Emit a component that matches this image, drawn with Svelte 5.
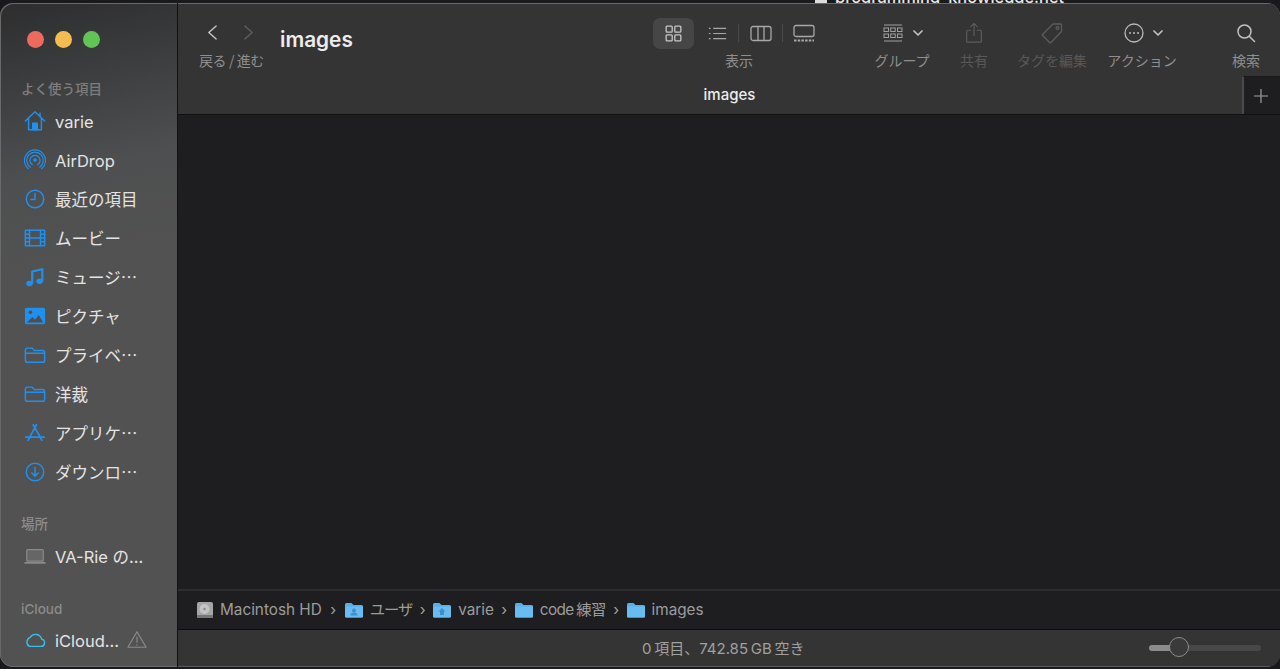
<script>
  const items = [
    ['home', 'varie', true], ['airdrop', 'AirDrop', true], ['clock', '最近の項目', false], ['film', 'ムービー', false],
    ['music', 'ミュージ…', false], ['photo', 'ピクチャ', false], ['folder', 'プライベ…', false], ['folder', '洋裁', false],
    ['apps', 'アプリケ…', false], ['download', 'ダウンロ…', false]
  ];
  const crumbs = [['user', 'ユーザ', 'kana'], ['home', 'varie', ''], ['plain', 'code 練習', 'mixed'], ['plain', 'images', '']];
</script>

{#snippet sideIcon(kind)}
  <svg class="sicon" viewBox="0 0 24 24" fill="none" stroke="#2090f0" stroke-width="1.6" stroke-linejoin="round" stroke-linecap="round">
    {#if kind === 'home'}
      <path d="M1.500 12 12 2l10.500 10M5 9v12.500h14V9M17.500 3.500v3" /><path d="M9.500 21.500v-7h5v7z" fill="#2090f0" />
    {:else if kind === 'airdrop'}
      <circle cx="12" cy="12" r="2" fill="#2090f0" stroke="none" />
      <path d="M9 17a5.500 5.500 0 1 1 6 0M6.800 19.800a9 9 0 1 1 10.400 0M4.800 21.500a11.500 11.500 0 1 1 14.400 0" stroke-width="1.300" />
    {:else if kind === 'clock'}
      <circle cx="12" cy="12" r="9.500" /><path d="M12 6v6.500H7.500" />
    {:else if kind === 'film'}
      <rect x="1.500" y="3.500" width="21" height="17" /><path d="M6 3.500v17M18 3.500v17M6 12h12M1.500 8h4.500M1.500 12h4.500M1.500 16h4.500M18 8h4.500M18 12h4.500M18 16h4.500" />
    {:else if kind === 'music'}
      <path d="M9 18.500V6l11-2.500V16" stroke-width="2.400" /><ellipse cx="6" cy="19" rx="3.500" ry="3" fill="#2090f0" stroke="none" /><ellipse cx="17" cy="16.500" rx="3.500" ry="3" fill="#2090f0" stroke="none" />
    {:else if kind === 'photo'}
      <rect x="1" y="3" width="22" height="18" rx="2" fill="#2090f0" stroke="none" />
      <path d="M3 19l6-6 3 3 4-5 5 8z" fill="#4f4f4f" stroke="none" /><circle cx="7" cy="8" r="2" fill="#4f4f4f" stroke="none" />
    {:else if kind === 'folder'}
      <path d="M1.500 6.500a2 2 0 0 1 2-2h5.500l2 2.500h9.500a2 2 0 0 1 2 2v9a2 2 0 0 1-2 2h-17a2 2 0 0 1-2-2zM1.500 10h21" />
    {:else if kind === 'apps'}
      <path d="M13.500 3 6 17M10 3l8 14M2 16.500h20M4.500 20 6 17.500M19.500 20 18 17.500" stroke-width="1.900" />
    {:else if kind === 'download'}
      <circle cx="12" cy="12" r="9.500" /><path d="M12 7v9.500M8.500 13l3.500 3.500 3.500-3.500" />
    {/if}
  </svg>
{/snippet}

{#snippet crumbFolder(kind)}
  <svg class="cfolder" viewBox="0 0 18 16">
    <path d="M0 2.500A1.500 1.500 0 0 1 1.500 1h5l2 2H16.500A1.500 1.500 0 0 1 18 4.500V14a1.500 1.500 0 0 1-1.500 1.500h-15A1.500 1.500 0 0 1 0 14z" fill="#5aaee6" />
    <path d="M0 4.500h18V14a1.500 1.500 0 0 1-1.500 1.500h-15A1.500 1.500 0 0 1 0 14z" fill="#69bcf0" />
    {#if kind === 'user'}
      <circle cx="9" cy="8.500" r="2" fill="#3f8fc8" /><path d="M5.500 13.500a3.500 3 0 0 1 7 0z" fill="#3f8fc8" />
    {:else if kind === 'home'}
      <path d="M9 6 5.500 9.500H7V13h4V9.500h1.500z" fill="#3f8fc8" />
    {/if}
  </svg>
{/snippet}

<div class="page">
  <div class="peek"><span class="peek-doc"></span><span class="peek-text">programming_knowledge.net</span></div>
  <div class="window">
    <aside class="sidebar">
      <div class="lights"><i class="red"></i><i class="yellow"></i><i class="green"></i></div>
      <div class="heading first">よく使う項目</div>
      {#each items as [kind, label, latin]}
        <div class="row" class:latin>{@render sideIcon(kind)}<span>{label}</span></div>
      {/each}
      <div class="heading place">場所</div>
      <div class="row latin">
        <svg class="sicon" viewBox="0 0 24 24" fill="none" stroke="#8a8a8a" stroke-width="1.300">
          <rect x="3" y="5" width="18" height="12.500" rx="1" fill="#666" /><path d="M0.500 19.500h23" stroke-width="2" />
        </svg>
        <span>VA-Rie の…</span>
      </div>
      <div class="heading cloud">iCloud</div>
      <div class="row latin">
        <svg class="sicon" viewBox="0 0 24 24" fill="none" stroke="#35c0e8" stroke-width="1.500">
          <path d="M6 19h12.500a4 4 0 0 0 .8-7.900 7 7 0 0 0-12.600-2A5.500 5.500 0 0 0 6 19z" />
        </svg>
        <span>iCloud…</span>
        <svg class="warn" viewBox="0 0 22 20" fill="none" stroke="#8a8a8a" stroke-width="1.300" stroke-linejoin="round">
          <path d="M11 1.500 1 18.500h20z" /><path d="M11 7v6.500M11 15.300v1.200" />
        </svg>
      </div>
    </aside>

    <main class="main">
      <header class="toolbar">
        <div class="tools">
          <div class="nav">
            <div class="nav-icons">
              <svg class="chev" viewBox="0 0 12 18" fill="none" stroke="#c8c8c8" stroke-width="1.500" stroke-linecap="round" stroke-linejoin="round"><path d="M10 2 2 9l8 7" /></svg>
              <svg class="chev" viewBox="0 0 12 18" fill="none" stroke="#5e5e5e" stroke-width="1.500" stroke-linecap="round" stroke-linejoin="round"><path d="m2 2 8 7-8 7" /></svg>
            </div>
            <div class="label">戻る / 進む</div>
          </div>
          <div class="title">images</div>

          <div class="view">
            <div class="view-icons">
              <div class="view-active">
                <svg class="ti" viewBox="0 0 22 22" fill="none" stroke="#c8c8c8" stroke-width="1.500"><rect x="2.500" y="2.500" width="7" height="7" rx="1" /><rect x="12.500" y="2.500" width="7" height="7" rx="1" /><rect x="2.500" y="12.500" width="7" height="7" rx="1" /><rect x="12.500" y="12.500" width="7" height="7" rx="1" /></svg>
              </div>
              <svg class="ti list" viewBox="0 0 22 22" fill="none" stroke="#a8a8a8" stroke-width="1.300"><path d="M6 5h15M6 11h15M6 17h15M1 5h2M1 11h2M1 17h2" /></svg>
              <i class="sep"></i>
              <svg class="ti cols" viewBox="0 0 22 16" fill="none" stroke="#a8a8a8" stroke-width="1.300"><rect x="1" y="1" width="20" height="14" rx="2" /><path d="M8 1v14M14 1v14" /></svg>
              <i class="sep"></i>
              <svg class="ti gallery" viewBox="0 0 22 18" fill="none" stroke="#a8a8a8" stroke-width="1.300"><rect x="1" y="1" width="20" height="11" rx="2" /><path d="M1 16h20" stroke-width="2" stroke-dasharray="2.500 1.200" /></svg>
            </div>
            <div class="label">表示</div>
          </div>

          <div class="tool group">
            <div class="tool-icon">
              <svg class="ti2" viewBox="0 0 20 18" fill="none" stroke="#a0a0a0" stroke-width="1"><path d="M1 1h18M1 17h18" /><rect x="1" y="4" width="4.500" height="3.500" /><rect x="7.700" y="4" width="4.500" height="3.500" /><rect x="14.500" y="4" width="4.500" height="3.500" /><rect x="1" y="10" width="4.500" height="3.500" /><rect x="7.700" y="10" width="4.500" height="3.500" /><rect x="14.500" y="10" width="4.500" height="3.500" /></svg>
              <svg class="caret" viewBox="0 0 10 6" fill="none" stroke="#c0c0c0" stroke-width="1.700" stroke-linecap="round" stroke-linejoin="round"><path d="m1 1 4 4 4-4" /></svg>
            </div>
            <div class="label">グループ</div>
          </div>

          <div class="tool share">
            <div class="tool-icon">
              <svg class="ti3" viewBox="0 0 18 24" fill="none" stroke="#5c5c5c" stroke-width="1.300" stroke-linecap="round" stroke-linejoin="round"><path d="M5.500 9H2a1 1 0 0 0-1 1v11a1 1 0 0 0 1 1h14a1 1 0 0 0 1-1V10a1 1 0 0 0-1-1h-3.500M9 15V2M5.500 5 9 1.500 12.500 5" /></svg>
            </div>
            <div class="label dim">共有</div>
          </div>

          <div class="tool tag">
            <div class="tool-icon">
              <svg class="ti3" viewBox="0 0 22 22" fill="none" stroke="#5c5c5c" stroke-width="1.300" stroke-linejoin="round"><path d="M1.500 12.500 12 2h7.500a1 1 0 0 1 1 1v6.500L10 20.500a1 1 0 0 1-1.400 0l-7-7a.7.7 0 0 1-.1-1z" /><circle cx="16.500" cy="6" r="1.400" /></svg>
            </div>
            <div class="label dim">タグを編集</div>
          </div>

          <div class="tool action">
            <div class="tool-icon">
              <svg class="ti4" viewBox="0 0 20 20" fill="none" stroke="#b8b8b8" stroke-width="1.300"><circle cx="10" cy="10" r="9" /><path d="M6 10h.01M10 10h.01M14 10h.01" stroke-width="2" stroke-linecap="round" /></svg>
              <svg class="caret" viewBox="0 0 10 6" fill="none" stroke="#c0c0c0" stroke-width="1.700" stroke-linecap="round" stroke-linejoin="round"><path d="m1 1 4 4 4-4" /></svg>
            </div>
            <div class="label">アクション</div>
          </div>

          <div class="tool search">
            <div class="tool-icon">
              <svg class="ti4" viewBox="0 0 20 20" fill="none" stroke="#c0c0c0" stroke-width="1.500" stroke-linecap="round"><circle cx="8.500" cy="8.500" r="6.500" /><path d="m13.500 13.500 5 5" /></svg>
            </div>
            <div class="label">検索</div>
          </div>
        </div>
        <div class="tabbar">
          <div class="tab">images</div>
          <div class="plus">
            <svg viewBox="0 0 14 14" fill="none" stroke="#a0a0a0" stroke-width="1.200"><path d="M7 0v14M0 7h14" /></svg>
          </div>
        </div>
      </header>

      <div class="content"></div>

      <nav class="pathbar">
        <svg class="disk" viewBox="0 0 18 18">
          <rect x="1" y="1" width="16" height="16" rx="2" fill="#a6a6a6" />
          <circle cx="8.500" cy="8" r="5" fill="#c4c4c4" /><circle cx="8.500" cy="8" r="1.300" fill="#8c8c8c" />
          <rect x="1" y="14" width="16" height="3" fill="#777" />
        </svg>
        <span class="crumb">Macintosh HD</span><span class="arrow root">›</span>
        {#each crumbs as [kind, label, tone], i}
          {@render crumbFolder(kind)}<span class="crumb {tone}">{label}</span>{#if i < crumbs.length - 1}<span class="arrow">›</span>{/if}
        {/each}
      </nav>

      <footer class="status">
        <span class="status-text">0 項目、742.85 GB 空き</span>
        <div class="slider"><div class="fill"></div><div class="knob"></div></div>
      </footer>
    </main>
  </div>
</div>

<style>
  :global(body) { margin: 0; background: #1a1a1c; }
  .page {
    position: relative;
    width: 1280px;
    height: 669px;
    overflow: hidden;
    background: #1a1a1c;
    padding-top: 3px;
    box-sizing: border-box;
    font-family: "Noto Sans CJK JP", "Inter", "Liberation Sans", sans-serif;
  }
  .peek { position: absolute; top: -10px; left: 815px; display: flex; align-items: center; gap: 8px; color: #e8e8e8; font: 500 16.4px/14px "Inter", sans-serif; }
  .peek-doc { width: 12px; height: 12px; background: #ddd; }
  .window {
    display: flex;
    height: 664px;
    border-radius: 13px;
    overflow: hidden;
    box-shadow: inset 0 0 0 1px #6a6a6a;
    position: relative;
  }
  .sidebar {
    width: 177px;
    flex: none;
    border-right: 1px solid #111;
    background: linear-gradient(168deg, #2d2d2e 0, #3c3d3e 12%, #4e4f50 26%, #525252 40%, #525252 100%);
    color: #e2e2e2;
    box-sizing: content-box;
    border-radius: 13px 0 0 13px;
    box-shadow: inset 1px 1px 0 #6a6a6a, inset 0 -1px 0 #6a6a6a;
  }
  .lights { display: flex; gap: 11px; padding: 28px 0 0 27px; }
  .lights i { width: 17px; height: 17px; border-radius: 50%; display: block; }
  .red { background: #ee6a5f; }
  .yellow { background: #f5bd4f; }
  .green { background: #61c454; }
  .heading { font-size: 13.500px; line-height: 18px; color: #8c8c8c; padding-left: 21px; font-weight: 500; }
  .first { margin-top: 31px; margin-bottom: 4px; color: #7d7d7d; }
  .place { margin-top: 23px; margin-bottom: 4px; }
  .cloud { margin-top: 25px; margin-bottom: 2px; font-family: "Inter", sans-serif; }
  .row {
    display: flex;
    align-items: center;
    height: 39px;
    padding-left: 24px;
    font-size: 16.500px;
    line-height: 24px;
    color: #e4e4e4;
    white-space: nowrap;
  }
  .row.latin { font-family: "Inter", "Noto Sans CJK JP", sans-serif; }
  .row span { margin-left: 9px; }
  .row.latin span { margin-top: 2px; }
  .sicon { width: 22px; height: 22px; flex: none; }
  .warn { width: 20px; height: 19px; margin-left: 8px; }

  .main { flex: 1; min-width: 0; display: flex; flex-direction: column; background: #1e1e20; border-radius: 0 13px 13px 0; overflow: hidden; box-shadow: inset 0 1px 0 #6a6a6a; }
  .toolbar { height: 110px; flex: none; background: #343434; border-top: 1px solid #6a6a6a; border-bottom: 1px solid #111; box-sizing: content-box; display: flex; flex-direction: column; }
  .tools { height: 72px; position: relative; display: flex; flex: none; color: #9a9a9a; }
  .label { font-size: 14px; line-height: 18px; color: #8e8e8e; white-space: nowrap; text-align: center; }
  .label.dim { color: #585858; }
  .nav { width: 102px; flex: none; padding: 14px 0 0 21px; box-sizing: border-box; }
  .nav-icons { display: flex; gap: 25px; height: 28px; padding-left: 8px; align-items: center; }
  .nav .label { margin-top: 5px; text-align: left; width: 66px; letter-spacing: -.4px; }
  .chev { width: 11px; height: 17px; }
  .title { width: 373px; flex: none; color: #ececec; font: 600 20.800px/28px "Inter", "Liberation Sans", sans-serif; padding-top: 22px; box-sizing: border-box; }
  .view { width: 172px; flex: none; }
  .view-icons { display: flex; align-items: center; height: 32px; margin-top: 13px; }
  .view-active { width: 41px; height: 31px; border-radius: 7px; background: #464646; display: flex; align-items: center; justify-content: center; }
  .ti { width: 19px; height: 19px; }
  .ti.list { margin-left: 14px; }
  .ti.cols { width: 22px; height: 17px; margin-left: 11px; margin-right: -1px; }
  .ti.gallery { width: 22px; height: 19px; margin-left: 10px; }
  .sep { width: 1px; height: 18px; background: #4a4a4a; margin-left: 11px; display: block; }
  .view .label { margin-top: 2px; width: 172px; }
  .tool { flex: none; display: flex; flex-direction: column; align-items: center; }
  .tool-icon { height: 32px; margin-top: 13px; display: flex; align-items: center; gap: 10px; }
  .tool .label { margin-top: 2px; }
  .group { width: 100px; margin-left: 27px; }
  .group .tool-icon { padding-left: 2px; }
  .share { width: 40px; margin-left: 2px; }
  .tag { width: 94px; margin-left: 11px; }
  .action { width: 94px; margin-left: -4px; }
  .action .tool-icon { padding-left: 2px; gap: 9px; }
  .search { width: 46px; margin-left: 34px; }
  .ti2 { width: 20px; height: 18px; }
  .ti3 { width: 22px; height: 22px; }
  .ti4 { width: 20px; height: 20px; }
  .caret { width: 10px; height: 6px; }

  .tabbar { flex: 1; display: flex; align-items: stretch; position: relative; }
  .tab { flex: 1; color: #ededed; font: 500 15px/30px "Inter", "Liberation Sans", sans-serif; text-align: center; padding: 4px 0 0 38px; }
  .plus { width: 33px; flex: none; box-sizing: content-box; background: #1e1e20; border-left: 2px solid #4a4a4a; border-top: 1px solid #1a1a1a; display: flex; align-items: center; justify-content: center; padding-right: 3px; margin-left: -1px; }
  .plus svg { width: 14px; height: 14px; }

  .content { flex: 1; background: #1e1e20; }
  .pathbar { height: 38px; flex: none; display: flex; align-items: center; padding-left: 18px; border-top: 2px solid #2d2d2f; border-bottom: 1px solid #0e0e0e; color: #9c9c9c; font: 400 15.300px/20px "Inter", "Noto Sans CJK JP", sans-serif; background: #1e1e20; white-space: nowrap; }
  .crumb.kana { letter-spacing: -1px; }
  .crumb.mixed { word-spacing: -1px; letter-spacing: -.6px; }
  .disk { width: 18px; height: 18px; margin-right: 6px; flex: none; }
  .cfolder { width: 18px; height: 16px; margin-right: 7px; flex: none; }
  .arrow { margin: 0 7.500px; color: #a0a0a0; }
  .arrow.root { margin: 0 8.500px; }
  .status { height: 37px; flex: none; background: #343434; display: flex; align-items: center; position: relative; box-shadow: inset 0 -1px 0 #5a5a5a; }
  .status-text { position: absolute; left: 464px; color: #a0a0a0; font: 400 15px/20px "Inter", "Noto Sans CJK JP", sans-serif; white-space: nowrap; word-spacing: -1.500px; }
  .slider { position: absolute; left: 971px; top: 15px; width: 112px; height: 6px; border-radius: 3px; background: #484848; }
  .fill { width: 22px; height: 6px; border-radius: 3px 0 0 3px; background: #8c8c8c; }
  .knob { position: absolute; left: 20px; top: -8px; width: 20px; height: 20px; border: 1.500px solid #8c8c8c; border-radius: 50%; background: #3a3a3a; box-sizing: border-box; }
</style>
